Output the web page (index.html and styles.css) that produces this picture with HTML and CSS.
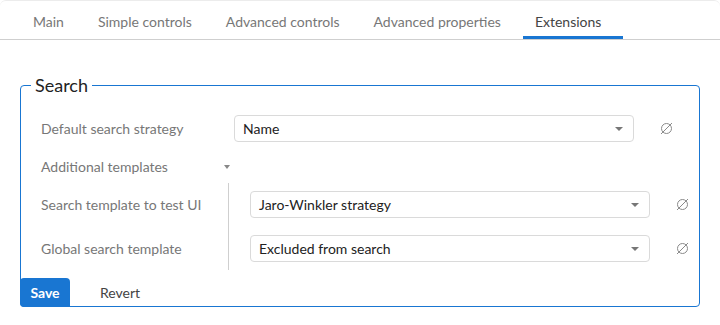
FILE: index.html
```html
<!DOCTYPE html>
<html lang="en">
<head>
    <meta charset="UTF-8">
    <meta name="viewport" content="width=device-width, initial-scale=1.0">
    <title>Extensions</title>
    <link rel="stylesheet" href="styles.css">
</head>
<body>
    <div class="page">
        <div class="tabs">
            <div class="tab">Main</div>
            <div class="tab">Simple controls</div>
            <div class="tab">Advanced controls</div>
            <div class="tab">Advanced properties</div>
            <div class="tab active">Extensions</div>
        </div>

        <fieldset class="group">
            <legend>Search</legend>
            <div class="group-body">
                <div class="row">
                    <div class="label wide">Default search strategy</div>
                    <div class="select"><span>Name</span><i class="caret"></i></div>
                    <svg class="reset" width="13" height="13" viewBox="0 0 13 13"><circle cx="6.5" cy="6.5" r="5"/><line x1="1" y1="12" x2="12" y2="1"/></svg>
                </div>

                <div class="row toggle">
                    <div class="label">Additional templates</div>
                    <i class="caret small"></i>
                </div>

                <div class="nested">
                    <div class="nested-labels">
                        <div class="label">Search template to test UI</div>
                        <div class="label">Global search template</div>
                    </div>
                    <div class="nested-controls">
                        <div class="row">
                            <div class="select"><span>Jaro-Winkler strategy</span><i class="caret"></i></div>
                            <svg class="reset" width="13" height="13" viewBox="0 0 13 13"><circle cx="6.5" cy="6.5" r="5"/><line x1="1" y1="12" x2="12" y2="1"/></svg>
                        </div>
                        <div class="row">
                            <div class="select"><span>Excluded from search</span><i class="caret"></i></div>
                            <svg class="reset" width="13" height="13" viewBox="0 0 13 13"><circle cx="6.5" cy="6.5" r="5"/><line x1="1" y1="12" x2="12" y2="1"/></svg>
                        </div>
                    </div>
                </div>

                <div class="actions">
                    <button class="btn primary">Save</button>
                    <button class="btn">Revert</button>
                </div>
            </div>
        </fieldset>
    </div>
</body>
</html>
```

FILE: styles.css
```css
body {
    margin: 0;
    font-family: Lato, "Open Sans", sans-serif;
    font-size: 14px;
    background: #fff;
    color: #222;
}
.page {
    border-top: 1px solid #ececec;
    border-radius: 6px 6px 0 0;
}
.tabs {
    display: flex;
    padding-left: 21px;
    border-bottom: 1px solid #cfcfcf;
}
.tab {
    padding: 11px 22px 4px 12px;
    line-height: 20px;
    color: #777;
    border-bottom: 3px solid transparent;
}
.tab.active {
    color: #444;
    border-bottom-color: #1976d2;
}
.group {
    margin: 35px 20px 0 20px;
    padding: 0;
    border: 1px solid #1976d2;
    border-radius: 4px;
}
.group legend {
    margin-left: 10px;
    padding: 0 4px;
    font-size: 18px;
    line-height: 20px;
    color: #222;
}
.group-body {
    padding: 20px 0 0 20px;
}
.row {
    display: flex;
    align-items: center;
    height: 27px;
}
.label {
    color: #777;
    line-height: 27px;
}
.label.wide {
    width: 193px;
}
.select {
    width: 400px;
    height: 27px;
    box-sizing: border-box;
    border: 1px solid #dadada;
    border-radius: 4px;
    padding: 0 10px 0 8px;
    display: flex;
    align-items: center;
    justify-content: space-between;
    color: #222;
}
.caret {
    width: 0;
    height: 0;
    border-left: 4px solid transparent;
    border-right: 4px solid transparent;
    border-top: 4px solid #777;
}
.reset {
    margin-left: 26px;
    fill: none;
    stroke: #8a8a8a;
    stroke-width: 1;
}
.toggle {
    margin-top: 15px;
    height: 20px;
}
.toggle .label {
    width: 183px;
    line-height: 20px;
}
.caret.small {
    border-left-width: 3.5px;
    border-right-width: 3.5px;
    border-top-color: #888;
}
.nested {
    display: flex;
    margin-top: 6px;
}
.nested-labels {
    width: 187px;
    padding: 8px 0;
    display: flex;
    flex-direction: column;
    gap: 17px;
}
.nested-controls {
    border-left: 1px solid #cfcfcf;
    padding: 8px 0 8px 21px;
    display: flex;
    flex-direction: column;
    gap: 17px;
}
.actions {
    display: flex;
    align-items: center;
    margin: 8px 0 -1px -21px;
}
.btn {
    font-family: inherit;
    font-size: 14px;
    height: 29px;
    border: none;
    background: none;
    color: #444;
    padding: 0 10px;
    cursor: pointer;
}
.btn.primary {
    width: 50px;
    background: #1976d2;
    color: #fff;
    font-weight: bold;
    border-radius: 4px 4px 0 4px;
    margin-right: 20px;
}
```
